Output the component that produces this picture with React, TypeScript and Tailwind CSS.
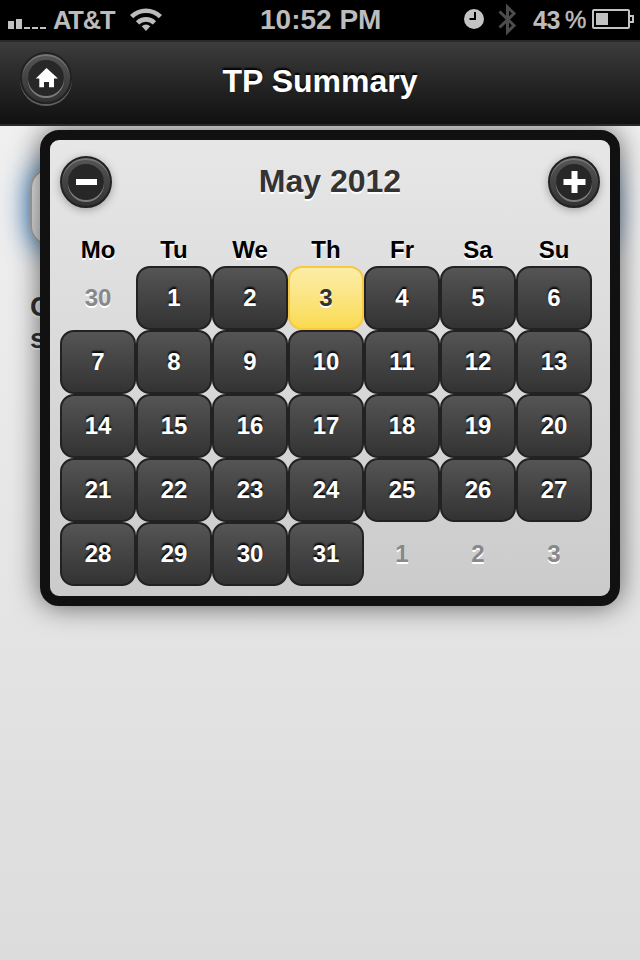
import React from "react";

const weekdays = ["Mo", "Tu", "We", "Th", "Fr", "Sa", "Su"];

type Day = { label: number; outside: boolean };

const days: Day[] = [
  { label: 30, outside: true },
  ...Array.from({ length: 31 }, (_, i) => ({ label: i + 1, outside: false })),
  { label: 1, outside: true },
  { label: 2, outside: true },
  { label: 3, outside: true },
];

const SELECTED = 3;

function StatusBar() {
  return (
    <div className="flex h-10 items-start bg-black text-[#bcbcbc]">
      <svg className="h-10 w-[53px] shrink-0" viewBox="0 0 53 40" fill="#c2c2c2">
        <rect x="8" y="21" width="6" height="8" />
        <rect x="16" y="19" width="6" height="10" />
        <rect x="24" y="27" width="6" height="2" />
        <rect x="32" y="27" width="6" height="2" />
        <rect x="40" y="27" width="6" height="2" />
      </svg>
      <span className="w-[75px] pt-[3px] text-[25.5px] leading-[34px] font-bold tracking-[-1.2px] whitespace-nowrap">
        AT&amp;T
      </span>
      <svg className="h-10 w-9 shrink-0" viewBox="128 0 36 40" fill="none" stroke="#bcbcbc">
        <path d="M131.600 16.600a20.500 20.500 0 0 1 28.800 0" strokeWidth="4.600" />
        <path d="M137.500 22.800a12.300 12.300 0 0 1 17 0" strokeWidth="4.600" />
        <path d="M146 31l-4.300-4.800a6.200 6.200 0 0 1 8.600 0z" fill="#bcbcbc" stroke="none" />
      </svg>
      <span className="ml-24 w-[202px] pt-[3px] text-[28px] leading-[34px] font-bold whitespace-nowrap">
        10:52 PM
      </span>
      <svg className="h-10 w-[71px] shrink-0" viewBox="462 0 71 40" fill="none">
        <circle cx="474" cy="19" r="10" fill="#c4c4c4" />
        <path d="M475 12v7h-5.500" stroke="#000" strokeWidth="2" />
        <path d="M499.500 11.500l14.500 14-6.500 6.500V7l6.500 6.500-14.500 14" stroke="#4c4c4c" strokeWidth="3" />
      </svg>
      <span className="w-8 pt-[3px] text-[25px] leading-[34px] font-bold tracking-[-0.5px]">43</span>
      <span className="w-[27px] pt-[3px] text-[24px] leading-[34px] [-webkit-text-stroke:0.500px_#bcbcbc]">%</span>
      <svg className="h-10 w-[48px] shrink-0" viewBox="592 0 48 40" fill="none">
        <rect x="593" y="10" width="36" height="18" rx="1" stroke="#c2c2c2" strokeWidth="2" />
        <path d="M629 16h4v6h-4" stroke="#c2c2c2" strokeWidth="2" />
        <rect x="596" y="13" width="12" height="12" fill="#c2c2c2" />
      </svg>
    </div>
  );
}

function RoundButton({ label, className, children }: { label: string; className: string; children: React.ReactNode }) {
  return (
    <button
      aria-label={label}
      className={
        "flex size-[52px] shrink-0 items-center justify-center rounded-full border-2 border-[#222] bg-linear-to-b from-[#555] to-[#333] " +
        className
      }
    >
      <span className="flex size-9 items-center justify-center rounded-full bg-[#272727] shadow-[0_2px_0_rgba(255,255,255,0.35)]">
        {children}
      </span>
    </button>
  );
}

function Header() {
  return (
    <header className="flex h-[86px] items-start border-y-2 border-[#2a2a2a] bg-linear-to-b from-[#3c3c3c] to-[#111] px-5 pt-2.5">
      <RoundButton label="Home" className="shadow-[inset_0_2px_0_rgba(255,255,255,0.2),0_2px_0_rgba(255,255,255,0.3)]">
        <svg className="size-6" viewBox="0 0 24 24" fill="#fff">
          <path d="M12.500 2L24 12.500h-4V21.300h-5V16h-5v5.300H5.300v-8.800H1.800z" />
        </svg>
      </RoundButton>
      <h1 className="flex-1 pt-[9px] pr-[52px] text-center text-[32px] leading-10 font-bold text-white [text-shadow:0_-2px_2px_#000]">
        TP Summary
      </h1>
    </header>
  );
}

function Calendar() {
  return (
    <section className="absolute top-1 left-10 h-[476px] w-[580px] rounded-[19px] border-10 border-[#111] bg-linear-to-b from-[#e7e7e7] to-[#cbcbcb] px-2.5 pt-4 shadow-[0_0_28px_rgba(0,0,0,0.6)]">
      <div className="flex items-start justify-between">
        <RoundButton label="Previous month" className="shadow-[inset_0_2px_0_rgba(255,255,255,0.2),0_2px_8px_rgba(0,0,0,0.3)]">
          <svg className="size-6" viewBox="0 0 24 24" fill="#fff">
            <rect x="2" y="9" width="21" height="6" />
          </svg>
        </RoundButton>
        <h2 className="pt-1 text-[32px] leading-[42px] font-bold text-[#333] [text-shadow:0_2px_0_#fff]">May 2012</h2>
        <RoundButton label="Next month" className="shadow-[inset_0_2px_0_rgba(255,255,255,0.2),0_2px_8px_rgba(0,0,0,0.3)]">
          <svg className="size-6" viewBox="0 0 24 24" fill="#fff">
            <path d="M9.500 1h6v8H23.500v6H15.500v8h-6v-8H1.500v-6h8z" />
          </svg>
        </RoundButton>
      </div>
      <div className="mt-[26px] grid w-[532px] grid-cols-7 text-center text-[24px] leading-8 font-bold text-black [text-shadow:0_2px_0_#fff]">
        {weekdays.map((d) => (
          <span key={d}>{d}</span>
        ))}
      </div>
      <div className="grid w-[532px] grid-cols-7 text-center text-[24px] leading-[60px] font-bold">
        {days.map((d, i) => {
          if (d.outside) {
            return (
              <span key={i} className="h-16 border-2 border-transparent text-[#888] [text-shadow:0_2px_0_#fff]">
                {d.label}
              </span>
            );
          }
          if (d.label === SELECTED) {
            return (
              <span
                key={i}
                className="h-16 rounded-[14px] border-2 border-[#f7c942] bg-linear-to-b from-[#fceda7] to-[#fadb4e] text-[#333] [text-shadow:0_2px_0_#fff]"
              >
                {d.label}
              </span>
            );
          }
          return (
            <span
              key={i}
              className="h-16 rounded-[14px] border-2 border-[#222] bg-linear-to-b from-[#555] to-[#333] text-white [text-shadow:0_-2px_2px_#000]"
            >
              {d.label}
            </span>
          );
        })}
      </div>
    </section>
  );
}

export default function App() {
  return (
    <div className="flex h-[960px] w-[640px] flex-col overflow-hidden font-['Liberation_Sans',Arial,sans-serif]">
      <StatusBar />
      <Header />
      <main className="relative flex-1 overflow-hidden bg-linear-to-b from-[#f0f0f0] to-[#dcdcdc] px-[30px] pt-[42px]">
        <div className="h-[78px] rounded-[20px] border-2 border-[#aaa] bg-linear-to-b from-[#eee] to-[#ddd] shadow-[0_0_28px_2px_#387bbe]" />
        <p className="mt-[45px] text-[28px] leading-8 font-bold text-[#333] [text-shadow:0_2px_0_#fff]">
          C<br />s
        </p>
        <Calendar />
      </main>
    </div>
  );
}
